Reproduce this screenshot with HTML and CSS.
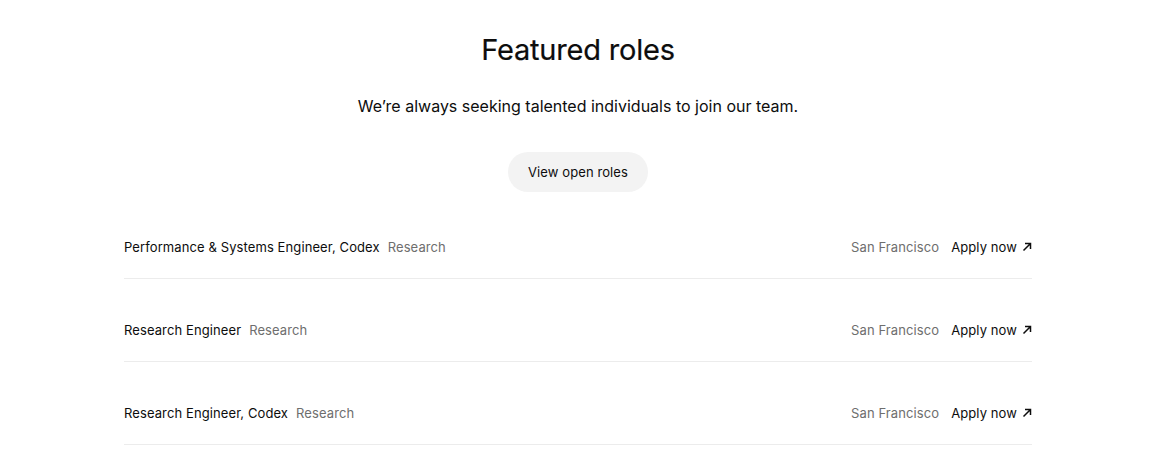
FILE: index.html
```html
<!DOCTYPE html>
<html lang="en">
<head>
<meta charset="utf-8">
<title>Featured roles</title>
<link rel="stylesheet" href="styles.css">
</head>
<body>
<section class="roles">
  <header class="roles-head">
    <h2 class="roles-title">Featured roles</h2>
    <p class="roles-sub">We’re always seeking talented individuals to join our team.</p>
    <a class="roles-btn" href="#">View open roles</a>
  </header>
  <ul class="roles-list">
    <li class="role">
      <div class="role-main"><span class="role-name">Performance &amp; Systems Engineer, Codex</span><span class="role-team">Research</span></div>
      <div class="role-side"><span class="role-loc">San Francisco</span><a class="role-apply" href="#">Apply now<svg class="arrow" viewBox="0 0 10 10" width="10" height="10"><path d="M1.5 8.5 L8.5 1.5 M3 1.5 H8.5 V7" fill="none" stroke="currentColor" stroke-width="1.5"/></svg></a></div>
    </li>
    <li class="role">
      <div class="role-main"><span class="role-name">Research Engineer</span><span class="role-team">Research</span></div>
      <div class="role-side"><span class="role-loc">San Francisco</span><a class="role-apply" href="#">Apply now<svg class="arrow" viewBox="0 0 10 10" width="10" height="10"><path d="M1.5 8.5 L8.5 1.5 M3 1.5 H8.5 V7" fill="none" stroke="currentColor" stroke-width="1.5"/></svg></a></div>
    </li>
    <li class="role">
      <div class="role-main"><span class="role-name">Research Engineer, Codex</span><span class="role-team">Research</span></div>
      <div class="role-side"><span class="role-loc">San Francisco</span><a class="role-apply" href="#">Apply now<svg class="arrow" viewBox="0 0 10 10" width="10" height="10"><path d="M1.5 8.5 L8.5 1.5 M3 1.5 H8.5 V7" fill="none" stroke="currentColor" stroke-width="1.5"/></svg></a></div>
    </li>
  </ul>
</section>
</body>
</html>
```
FILE: styles.css
```css
* { box-sizing: border-box; }
html, body { margin: 0; background: #fff; }
body {
  font-family: Inter, "Noto Sans", "Liberation Sans", sans-serif;
  color: #0d0d0d;
}
.roles { padding: 30px 127px 0 124px; }
.roles-head {
  display: flex;
  flex-direction: column;
  align-items: center;
  text-align: center;
}
.roles-title {
  margin: 0;
  font-size: 29px;
  line-height: 40px;
  font-weight: 400;
  letter-spacing: -0.2px;
  -webkit-text-stroke: 0.2px #0d0d0d;
}
.roles-sub {
  margin: 24px 0 0;
  font-size: 16px;
  line-height: 24px;
}
.roles-btn {
  margin-top: 34px;
  display: inline-flex;
  align-items: center;
  height: 40px;
  padding: 0 20px;
  border-radius: 20px;
  background: #f3f3f3;
  color: #0d0d0d;
  text-decoration: none;
  font-size: 13px;
  letter-spacing: 0.1px;
}
.roles-list {
  list-style: none;
  margin: 24px 0 0;
  padding: 0;
  display: flex;
  flex-direction: column;
  gap: 20px;
}
.role {
  display: flex;
  justify-content: space-between;
  align-items: center;
  padding: 20px 0;
  border-bottom: 1px solid #ececec;
  font-size: 13px;
  line-height: 22px;
  letter-spacing: 0.1px;
}
.role-main, .role-side { display: flex; align-items: center; gap: 8px; }
.role-side { gap: 12px; }
.role-team, .role-loc { color: #6e6e6e; }
.role-apply {
  display: inline-flex;
  align-items: center;
  gap: 5px;
  color: #0d0d0d;
  text-decoration: none;
}
.arrow { display: block; }
```
